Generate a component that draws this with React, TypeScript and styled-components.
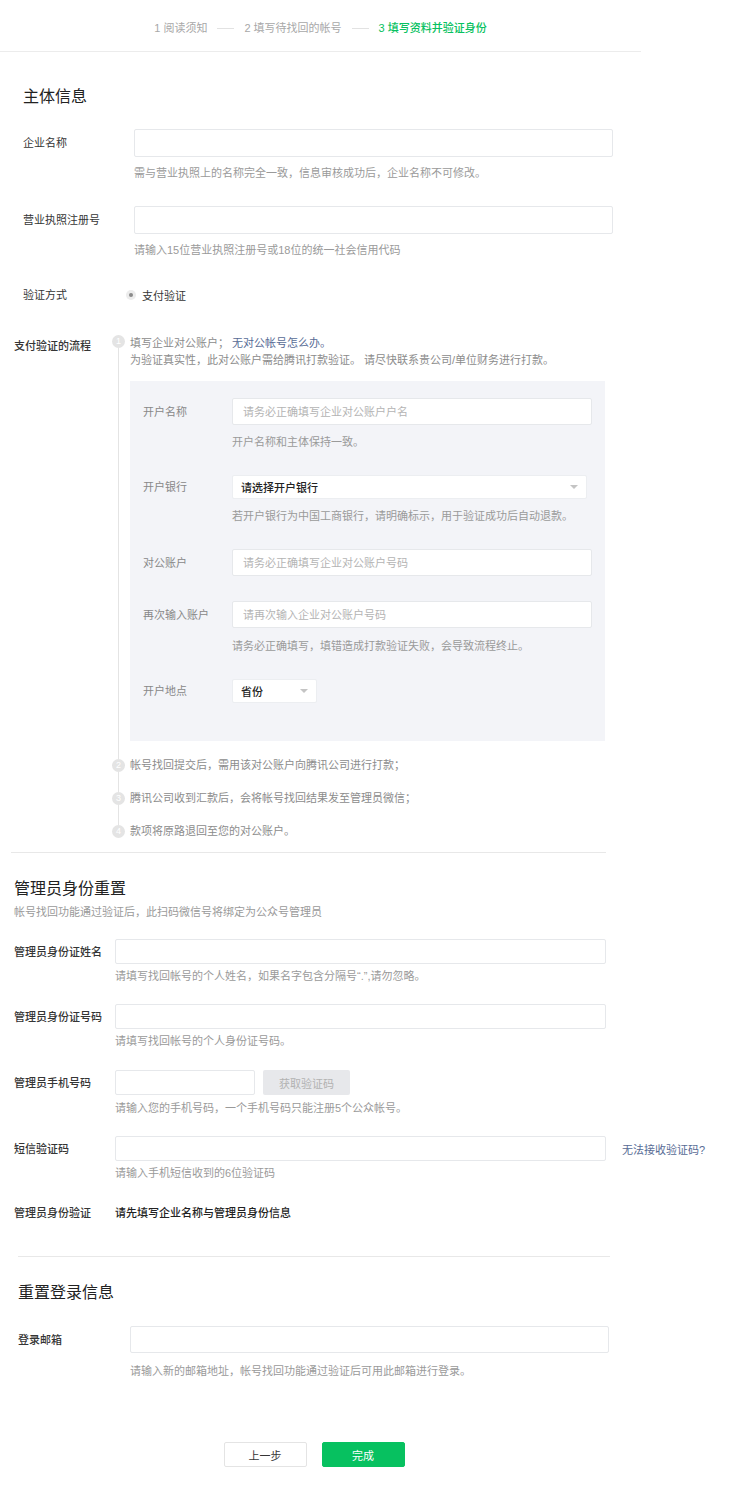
import styled, { createGlobalStyle } from "styled-components";

const GlobalStyle = createGlobalStyle`
  html, body {
    margin: 0;
    padding: 0;
    background: #fff;
  }
  body {
    font-family: "Liberation Sans", "Noto Sans CJK SC", sans-serif;
    font-size: 11px;
    color: #353535;
  }
  * {
    box-sizing: border-box;
  }
`;

const steps = ["1 阅读须知", "2 填写待找回的帐号", "3 填写资料并验证身份"];

export default function App() {
  return (
    <Page>
      <GlobalStyle />
      <StepBar>
        {steps.map((s, i) => (
          <StepGroup key={s}>
            {i > 0 && <StepDash />}
            <StepItem $active={i === steps.length - 1}>{s}</StepItem>
          </StepGroup>
        ))}
      </StepBar>

      <Section $left={23} $top={34}>
        <SectionTitle>主体信息</SectionTitle>
        <Fields $top={21}>
          <Field $labelWidth={111}>
            <Label>企业名称</Label>
            <TextInput $width={479} $height={28} />
            <Help $gap={8}>需与营业执照上的名称完全一致，信息审核成功后，企业名称不可修改。</Help>
          </Field>
          <Field $labelWidth={111} $gapAfter={27}>
            <Label>营业执照注册号</Label>
            <TextInput $width={479} $height={28} />
            <Help $gap={8}>请输入15位营业执照注册号或18位的统一社会信用代码</Help>
          </Field>
          <Field $labelWidth={103} $gapAfter={20}>
            <Label>验证方式</Label>
            <RadioRow>
              <RadioDot />
              <span>支付验证</span>
            </RadioRow>
          </Field>
        </Fields>
      </Section>

      <FlowRow>
        <FlowLabel>支付验证的流程</FlowLabel>
        <FlowList>
          <FlowStep>
            <Marker $first>
              <StepNum>1</StepNum>
              <Line />
            </Marker>
            <FlowBody>
              <FlowText $flush>
                填写企业对公账户； <Link>无对公帐号怎么办。</Link>
              </FlowText>
              <FlowText $flush>为验证真实性，此对公账户需给腾讯打款验证。 请尽快联系贵公司/单位财务进行打款。</FlowText>
              <GrayBox>
                <Field $labelWidth={89}>
                  <Label $soft>开户名称</Label>
                  <TextInput $width={360} $height={27} placeholder="请务必正确填写企业对公账户户名" />
                  <Help $gap={9}>开户名称和主体保持一致。</Help>
                </Field>
                <Field $labelWidth={89}>
                  <Label $soft>开户银行</Label>
                  <SelectBox $width={355}>
                    请选择开户银行
                    <Caret />
                  </SelectBox>
                  <Help $gap={9}>若开户银行为中国工商银行，请明确标示，用于验证成功后自动退款。</Help>
                </Field>
                <Field $labelWidth={89}>
                  <Label $soft>对公账户</Label>
                  <TextInput $width={360} $height={27} placeholder="请务必正确填写企业对公账户号码" />
                </Field>
                <Field $labelWidth={89}>
                  <Label $soft>再次输入账户</Label>
                  <TextInput $width={360} $height={27} placeholder="请再次输入企业对公账户号码" />
                  <Help $gap={10}>请务必正确填写，填错造成打款验证失败，会导致流程终止。</Help>
                </Field>
                <Field $labelWidth={89} $gapAfter={0}>
                  <Label $soft>开户地点</Label>
                  <SelectBox $width={85}>
                    省份
                    <Caret />
                  </SelectBox>
                </Field>
              </GrayBox>
            </FlowBody>
          </FlowStep>
          <FlowStep>
            <Marker>
              <Line $top />
              <StepNum>2</StepNum>
              <Line />
            </Marker>
            <FlowText>帐号找回提交后，需用该对公账户向腾讯公司进行打款；</FlowText>
          </FlowStep>
          <FlowStep>
            <Marker>
              <Line $top />
              <StepNum>3</StepNum>
              <Line />
            </Marker>
            <FlowText>腾讯公司收到汇款后，会将帐号找回结果发至管理员微信；</FlowText>
          </FlowStep>
          <FlowStep>
            <Marker $last>
              <Line $top />
              <StepNum>4</StepNum>
            </Marker>
            <FlowText>款项将原路退回至您的对公账户。</FlowText>
          </FlowStep>
        </FlowList>
      </FlowRow>

      <Divider $left={11} $width={595} $top={4} />

      <Section $left={14} $top={25}>
        <SectionTitle>管理员身份重置</SectionTitle>
        <SectionDesc>帐号找回功能通过验证后，此扫码微信号将绑定为公众号管理员</SectionDesc>
        <Fields $top={19}>
          <Field $labelWidth={101} $gapAfter={20}>
            <Label $strong>管理员身份证姓名</Label>
            <TextInput $width={491} $height={25} />
            <Help $gap={4}>请填写找回帐号的个人姓名，如果名字包含分隔号“.”,请勿忽略。</Help>
          </Field>
          <Field $labelWidth={101} $gapAfter={21}>
            <Label $strong>管理员身份证号码</Label>
            <TextInput $width={491} $height={25} />
            <Help $gap={4}>请填写找回帐号的个人身份证号码。</Help>
          </Field>
          <Field $labelWidth={101} $gapAfter={20}>
            <Label $strong>管理员手机号码</Label>
            <InputLine>
              <TextInput $width={140} $height={25} />
              <CodeButton type="button">获取验证码</CodeButton>
            </InputLine>
            <Help $gap={5}>请输入您的手机号码，一个手机号码只能注册5个公众帐号。</Help>
          </Field>
          <Field $labelWidth={101} $gapAfter={24}>
            <Label $strong>短信验证码</Label>
            <InputLine>
              <TextInput $width={491} $height={25} />
              <Link>无法接收验证码?</Link>
            </InputLine>
            <Help $gap={4}>请输入手机短信收到的6位验证码</Help>
          </Field>
          <Field $labelWidth={101} $gapAfter={0}>
            <Label $strong>管理员身份验证</Label>
            <Value>请先填写企业名称与管理员身份信息</Value>
          </Field>
        </Fields>
      </Section>

      <Divider $left={18} $width={592} $top={35} />

      <Section $left={18} $top={25}>
        <SectionTitle>重置登录信息</SectionTitle>
        <Fields $top={22}>
          <Field $labelWidth={112} $gapAfter={0}>
            <Label $strong>登录邮箱</Label>
            <TextInput $width={479} $height={27} />
            <Help $gap={10}>请输入新的邮箱地址，帐号找回功能通过验证后可用此邮箱进行登录。</Help>
          </Field>
        </Fields>
      </Section>

      <Actions>
        <Button type="button">上一步</Button>
        <Button type="button" $primary>
          完成
        </Button>
      </Actions>
    </Page>
  );
}

const Page = styled.div`
  width: 730px;
  min-height: 1499px;
  padding-bottom: 32px;
`;

const StepBar = styled.div`
  width: 641px;
  height: 52px;
  border-bottom: 1px solid #ececec;
  display: flex;
  justify-content: center;
  align-items: flex-start;
  padding: 20px 0 0 0;
`;

const StepGroup = styled.div`
  display: flex;
  align-items: center;
`;

const StepItem = styled.span<{ $active?: boolean }>`
  font-size: 11px;
  line-height: 16px;
  color: ${(p) => (p.$active ? "#07c160" : "#a8a8a8")};
  font-weight: ${(p) => (p.$active ? 500 : 400)};
`;

const StepDash = styled.span`
  width: 17px;
  height: 1px;
  background: #e2e2e2;
  margin: 0 10px;
`;

const Section = styled.section<{ $left: number; $top: number }>`
  padding-left: ${(p) => p.$left}px;
  padding-top: ${(p) => p.$top}px;
`;

const SectionTitle = styled.h2`
  margin: 0;
  font-size: 16px;
  line-height: 22px;
  font-weight: 400;
  color: #222;
`;

const SectionDesc = styled.p`
  margin: 4px 0 0;
  font-size: 11px;
  line-height: 16px;
  color: #9a9a9a;
`;

const Fields = styled.div<{ $top: number }>`
  margin-top: ${(p) => p.$top}px;
  display: flex;
  flex-direction: column;
`;

const Field = styled.div<{ $labelWidth: number; $gapAfter?: number }>`
  display: grid;
  grid-template-columns: ${(p) => p.$labelWidth}px auto;
  justify-content: start;
  align-items: center;
  margin-bottom: ${(p) => p.$gapAfter ?? 25}px;
`;

const Label = styled.span<{ $soft?: boolean; $strong?: boolean }>`
  font-size: 11px;
  line-height: 16px;
  color: ${(p) => (p.$soft ? "#888" : "#353535")};
  font-weight: ${(p) => (p.$strong ? 500 : 400)};
`;

const TextInput = styled.input<{ $width: number; $height: number }>`
  width: ${(p) => p.$width}px;
  height: ${(p) => p.$height}px;
  border: 1px solid #e6e8eb;
  border-radius: 2px;
  background: #fff;
  padding: 0 10px;
  font-family: inherit;
  font-size: 11px;
  color: #353535;

  &::placeholder {
    color: #b4b4b4;
  }

  &:focus {
    outline: none;
    border-color: #07c160;
  }
`;

const InputLine = styled.div`
  display: flex;
  align-items: center;
  gap: 8px;

  & > a {
    margin-left: 8px;
  }
`;

const Help = styled.p<{ $gap: number }>`
  grid-column: 2;
  margin: ${(p) => p.$gap}px 0 0;
  font-size: 11px;
  line-height: 16px;
  color: #9a9a9a;
`;

const Value = styled.span`
  font-size: 11px;
  line-height: 16px;
  color: #222;
  font-weight: 500;
`;

const RadioRow = styled.label`
  display: flex;
  align-items: center;
  gap: 6px;
  height: 20px;
  font-size: 11px;
  color: #353535;
`;

const RadioDot = styled.span`
  width: 10px;
  height: 10px;
  border-radius: 50%;
  background: #ececec;
  display: flex;
  align-items: center;
  justify-content: center;

  &::after {
    content: "";
    width: 4px;
    height: 4px;
    border-radius: 50%;
    background: #8a8a8a;
  }
`;

const FlowRow = styled.div`
  display: grid;
  grid-template-columns: 98px auto;
  justify-content: start;
  padding-left: 14px;
`;

const FlowLabel = styled.span`
  font-size: 11px;
  line-height: 16px;
  color: #353535;
  font-weight: 500;
  padding-top: 13px;
`;

const FlowList = styled.div`
  display: flex;
  flex-direction: column;
`;

const FlowStep = styled.div`
  display: grid;
  grid-template-columns: 18px auto;
  align-items: stretch;
`;

const Marker = styled.div<{ $first?: boolean; $last?: boolean }>`
  display: flex;
  flex-direction: column;
  align-items: center;
  width: 13px;
  padding-top: ${(p) => (p.$first ? 10 : 0)}px;
`;

const Line = styled.span<{ $top?: boolean }>`
  width: 1px;
  background: #e4e4e4;
  ${(p) => (p.$top ? "height: 10px;" : "flex: 1;")}
`;

const StepNum = styled.span`
  width: 13px;
  height: 13px;
  border-radius: 50%;
  background: #e4e4e4;
  color: #fff;
  font-size: 9px;
  line-height: 13px;
  text-align: center;
  flex-shrink: 0;
`;

const FlowBody = styled.div`
  display: flex;
  flex-direction: column;
  padding: 10px 0 8px;
`;

const FlowText = styled.p<{ $flush?: boolean }>`
  margin: 0;
  padding: ${(p) => (p.$flush ? "0" : "8px 0")};
  font-size: 11px;
  line-height: 17px;
  color: #8c8c8c;
`;

const Link = styled.a`
  color: #576b95;
  cursor: pointer;
  text-decoration: none;
  font-size: 11px;
`;

const GrayBox = styled.div`
  width: 475px;
  background: #f3f4f8;
  margin-top: 12px;
  padding: 17px 13px 38px;
  display: flex;
  flex-direction: column;
`;

const SelectBox = styled.div<{ $width: number }>`
  width: ${(p) => p.$width}px;
  height: 24px;
  background: #fff;
  border: 1px solid #eceef1;
  border-radius: 2px;
  padding: 0 8px;
  display: flex;
  align-items: center;
  justify-content: space-between;
  font-size: 11px;
  font-weight: 500;
  color: #222;
`;

const Caret = styled.span`
  width: 0;
  height: 0;
  border-left: 4px solid transparent;
  border-right: 4px solid transparent;
  border-top: 4px solid #c4c4c4;
`;

const CodeButton = styled.button`
  width: 87px;
  height: 25px;
  border: none;
  border-radius: 2px;
  background: #e7e8eb;
  color: #b2b2b2;
  font-family: inherit;
  font-size: 11px;
  cursor: not-allowed;
`;

const Divider = styled.hr<{ $left: number; $width: number; $top: number }>`
  margin: ${(p) => p.$top}px 0 0 ${(p) => p.$left}px;
  width: ${(p) => p.$width}px;
  border: none;
  border-top: 1px solid #e8e8e8;
`;

const Actions = styled.div`
  width: 628px;
  display: flex;
  justify-content: center;
  gap: 15px;
  margin-top: 63px;
`;

const Button = styled.button<{ $primary?: boolean }>`
  width: 83px;
  height: 25px;
  border-radius: 2px;
  font-family: inherit;
  font-size: 11px;
  cursor: pointer;
  border: 1px solid ${(p) => (p.$primary ? "#07c160" : "#e4e4e4")};
  background: ${(p) => (p.$primary ? "#07c160" : "#fff")};
  color: ${(p) => (p.$primary ? "#fff" : "#353535")};
`;
